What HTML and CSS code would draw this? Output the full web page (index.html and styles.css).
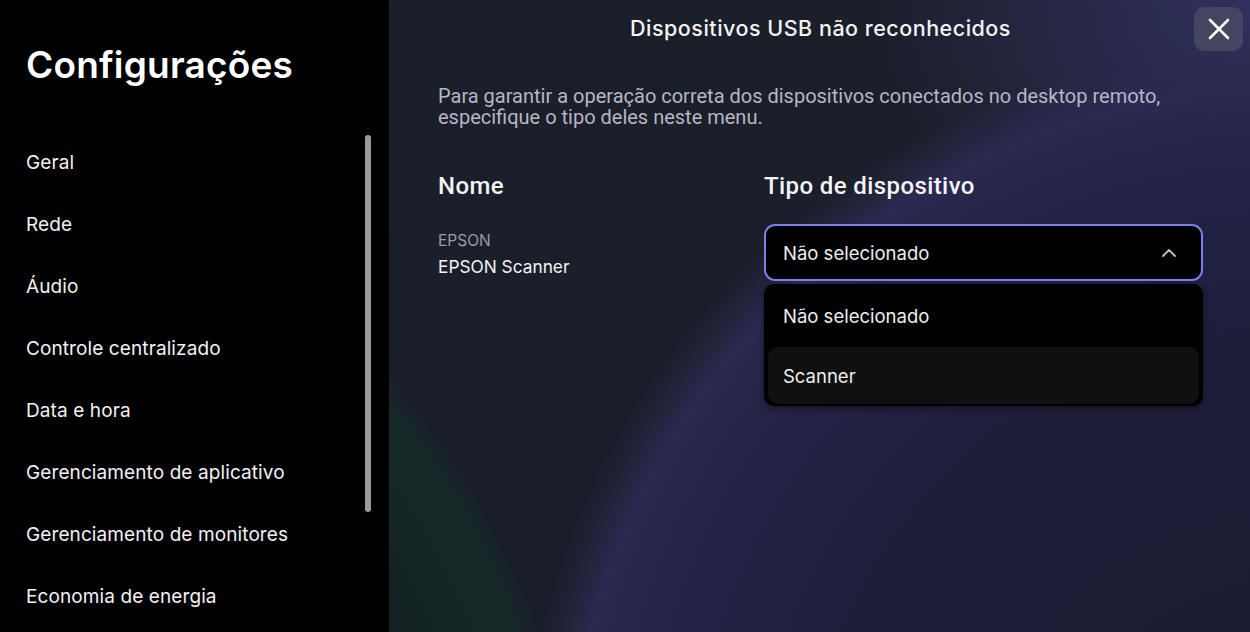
FILE: index.html
```html
<!DOCTYPE html>
<html lang="pt">
<head>
<meta charset="utf-8">
<title>Configurações</title>
<link rel="stylesheet" href="styles.css">
</head>
<body>
<div class="app">
  <aside class="sidebar">
    <h1 class="side-title">Configurações</h1>
    <div class="side-body">
      <nav class="menu">
        <a class="menu-item">Geral</a>
        <a class="menu-item">Rede</a>
        <a class="menu-item">Áudio</a>
        <a class="menu-item">Controle centralizado</a>
        <a class="menu-item">Data e hora</a>
        <a class="menu-item">Gerenciamento de aplicativo</a>
        <a class="menu-item">Gerenciamento de monitores</a>
        <a class="menu-item">Economia de energia</a>
      </nav>
      <div class="scrollbar"></div>
    </div>
  </aside>
  <main class="main">
    <header class="main-header">
      <h2 class="main-title">Dispositivos USB não reconhecidos</h2>
      <button class="close-btn" aria-label="Fechar">
        <svg width="22" height="22" viewBox="0 0 22 22"><path d="M2 2 L20 20 M20 2 L2 20" stroke="#fff" stroke-width="2.6" stroke-linecap="round"/></svg>
      </button>
    </header>
    <p class="desc">Para garantir a operação correta dos dispositivos conectados no desktop remoto, especifique o tipo deles neste menu.</p>
    <div class="table">
      <div class="col-name">
        <div class="th">Nome</div>
        <div class="dev">
          <div class="dev-vendor">EPSON</div>
          <div class="dev-name">EPSON Scanner</div>
        </div>
      </div>
      <div class="col-type">
        <div class="th">Tipo de dispositivo</div>
        <div class="select-wrap">
          <div class="select">
            <span>Não selecionado</span>
            <svg width="16" height="10" viewBox="0 0 16 10"><path d="M2 8 L8 2 L14 8" fill="none" stroke="#bfbfbf" stroke-width="1.8" stroke-linecap="round" stroke-linejoin="round"/></svg>
          </div>
          <ul class="options">
            <li class="option">Não selecionado</li>
            <li class="option hover">Scanner</li>
          </ul>
        </div>
      </div>
    </div>
  </main>
</div>
</body>
</html>
```
FILE: styles.css
```css
* { box-sizing: border-box; }
html, body { margin: 0; padding: 0; }
body {
  width: 1250px;
  height: 632px;
  overflow: hidden;
  background: #000;
  font-family: Inter, "Liberation Sans", sans-serif;
  color: #fff;
}
.app {
  display: flex;
  width: 1250px;
  height: 632px;
}
.sidebar {
  width: 389px;
  flex: none;
  background: #000;
  padding: 43px 0 0 26px;
  display: flex;
  flex-direction: column;
}
.side-title {
  margin: 0;
  font-size: 37px;
  font-weight: 600;
  letter-spacing: 0.2px;
  line-height: 44px;
}
.side-body {
  display: flex;
  margin-top: 48px;
}
.menu {
  display: flex;
  flex-direction: column;
  flex: 1;
  padding-top: 17px;
}
.menu-item {
  font-size: 19px;
  letter-spacing: 0.1px;
  line-height: 22px;
  height: 62px;
  color: #f2f2f2;
}
.scrollbar {
  width: 6px;
  height: 377px;
  background: #9a9a9a;
  border-radius: 3px;
  margin: 0 18px 0 0;
}
.main {
  flex: 1;
  position: relative;
  padding: 0 0 0 49px;
  background:
    radial-gradient(circle 800px at -600px 900px, #131e1f 0%, #142322 85%, #152a28 96.5%, rgba(21,42,40,0.4) 98.5%, rgba(21,42,40,0) 100%),
    radial-gradient(circle 770px at 900px 810px, #1b1b31 0%, #1e1e3a 60%, #222244 80%, #27264b 90%, #2b2a52 93.5%, rgba(43,42,82,0.5) 96%, rgba(43,42,82,0) 100%),
    radial-gradient(ellipse 380px 300px at 100% 0%, rgba(50, 50, 98, 0.95), rgba(50,50,98,0) 100%),
    linear-gradient(180deg, #1b1f2a 0%, #1a1e2a 100%);
}
.main-header {
  position: relative;
  height: 57px;
  display: flex;
  justify-content: center;
  align-items: center;
  margin-left: -49px;
}
.main-title {
  margin: 0;
  font-family: Inter, "Liberation Sans", sans-serif;
  font-size: 21.5px;
  letter-spacing: 0.5px;
  font-weight: 500;
  color: #f4f4f4;
  padding: 0 0 2px 2px;
}
.close-btn {
  position: absolute;
  right: 7px;
  top: 7px;
  width: 49px;
  height: 44px;
  border: none;
  border-radius: 10px;
  background: #45455f;
  display: flex;
  align-items: center;
  justify-content: center;
  padding: 0;
}
.desc {
  margin: 29px 0 0;
  width: 780px;
  font-family: Roboto, sans-serif;
  font-size: 20px;
  line-height: 21px;
  color: #b6b6c4;
}
.table {
  display: flex;
  margin-top: 44px;
}
.col-name {
  width: 326px;
}
.col-type {
  width: 439px;
}
.th {
  font-family: Roboto, sans-serif;
  font-size: 24px;
  letter-spacing: 0.4px;
  font-weight: 500;
  line-height: 28px;
  color: #f4f4f4;
  height: 40px;
}
.dev {
  padding-top: 20px;
}
.dev-vendor {
  font-size: 15.5px;
  color: #9c9ca6;
  line-height: 18px;
}
.dev-name {
  font-size: 17.3px;
  color: #f4f4f4;
  margin-top: 6px;
  line-height: 21px;
}
.select-wrap {
  width: 439px;
  margin-top: 12px;
}
.select {
  height: 57px;
  border: 2px solid #7d7df2;
  border-radius: 11px;
  background: #000;
  display: flex;
  align-items: center;
  justify-content: space-between;
  padding: 0 24px 0 17px;
  font-size: 18.5px;
  color: #eeeeee;
}
.options {
  list-style: none;
  margin: 3px 0 0;
  padding: 0 4px 2px;
  background: #000;
  border-radius: 10px;
  box-shadow: 0 2px 6px rgba(0,0,0,0.5);
}
.option {
  height: 63px;
  display: flex;
  align-items: center;
  padding-left: 15px;
  font-size: 18.5px;
  color: #eeeeee;
  border-radius: 10px;
}
.option.hover {
  height: 57px;
  background: #101010;
}
```
